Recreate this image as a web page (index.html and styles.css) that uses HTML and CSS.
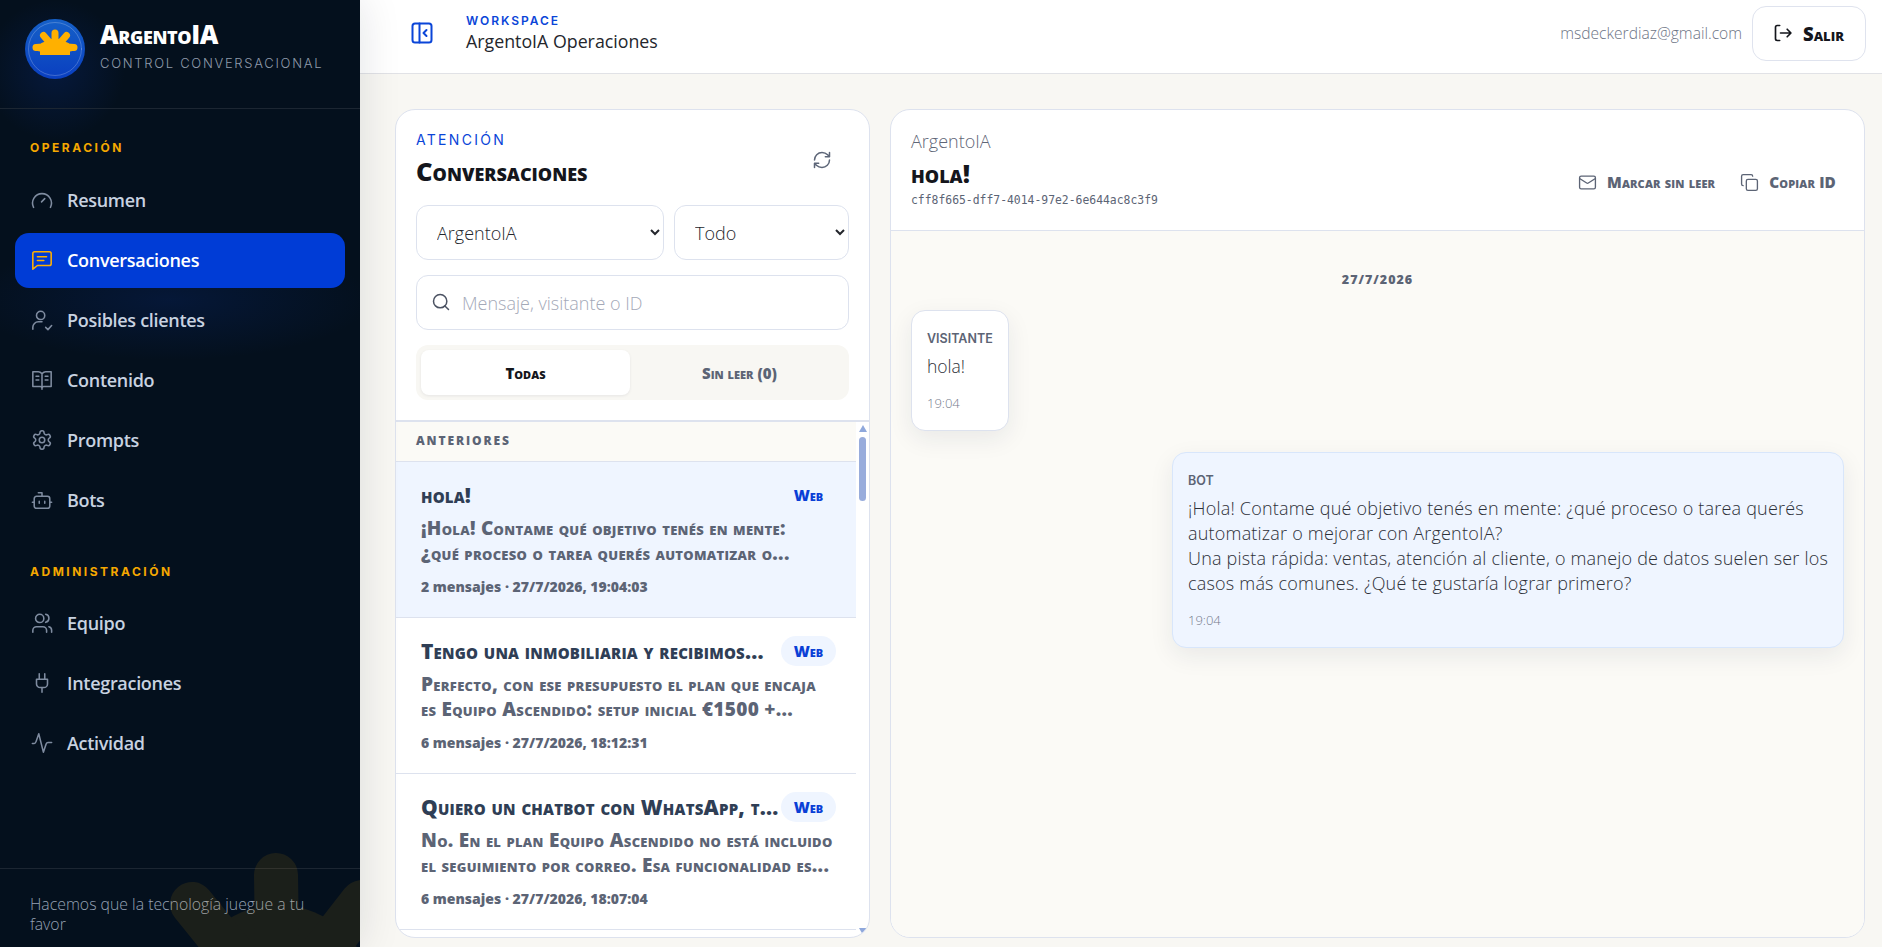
FILE: index.html
```html
<!DOCTYPE html>
<html lang="es">
<head>
<meta charset="utf-8">
<title>ArgentoIA</title>
<link rel="stylesheet" href="styles.css">
</head>
<body>
<div class="app">
  <aside class="sidebar">
    <div class="brand">
      <svg class="logo" viewBox="0 0 60 60">
        <defs><linearGradient id="lg" x1="0" y1="0" x2="0" y2="1"><stop offset="0" stop-color="#1560c8"/><stop offset="1" stop-color="#0a3fc0"/></linearGradient></defs>
        <circle cx="30" cy="30" r="30" fill="url(#lg)"/>
        <circle cx="30" cy="30" r="26.5" fill="none" stroke="#fff" stroke-opacity=".28" stroke-width=".8"/>
        <path d="M30 26L30 14M25 24L18.500 16.500M35 24L41.500 16.500M18 28L11 28.500M42 28L49 28.500" stroke="#ffb000" stroke-width="7" stroke-linecap="round" fill="none"/>
        <path d="M16.500 24L25 20.500L35 20.500L43.500 24L50 31.500L45 32.500V36H15V32.500L10 31.500Z" fill="#ffb000"/>
      </svg>
      <div class="brand-text">
        <div class="brand-name">ArgentoIA</div>
        <div class="brand-sub">CONTROL CONVERSACIONAL</div>
      </div>
    </div>
    <nav class="nav">
      <div class="nav-label">OPERACIÓN</div>
      <a class="nav-item"><svg class="ico" viewBox="0 0 24 24"><path d="M2.800 20a10.300 10.300 0 1 1 18.400 0"/><path d="M11.500 14l3.500-3.500"/></svg>Resumen</a>
      <a class="nav-item active"><svg class="ico" viewBox="0 0 24 24"><path d="M22 16a2 2 0 0 1-2 2H7l-5 4V5a2 2 0 0 1 2-2h16a2 2 0 0 1 2 2z"/><path d="M7 8.500h10M7 12.500h7"/></svg>Conversaciones</a>
      <a class="nav-item"><svg class="ico" viewBox="0 0 24 24"><circle cx="10.500" cy="7" r="4.500"/><path d="M2 22v-2a6 6 0 0 1 6-6h4"/><path d="M16 20l2.500 2.500 4-4.500"/></svg>Posibles clientes</a>
      <a class="nav-item"><svg class="ico" viewBox="0 0 24 24"><path d="M12 5v17M12 5c-1-1-2-2-4-2H2v16h8a2 2 0 0 1 2 2 2 2 0 0 1 2-2h8V3h-6c-2 0-3 1-4 2z"/><path d="M5.500 8h3M5.500 12h3M15.500 8h3M15.500 12h3"/></svg>Contenido</a>
      <a class="nav-item"><svg class="ico" viewBox="0 0 24 24"><path d="M12.220 2h-.44a2 2 0 0 0-2 2v.18a2 2 0 0 1-1 1.730l-.43.25a2 2 0 0 1-2 0l-.15-.08a2 2 0 0 0-2.730.73l-.22.38a2 2 0 0 0 .73 2.730l.15.1a2 2 0 0 1 1 1.720v.51a2 2 0 0 1-1 1.740l-.15.09a2 2 0 0 0-.73 2.730l.22.38a2 2 0 0 0 2.730.73l.15-.08a2 2 0 0 1 2 0l.43.25a2 2 0 0 1 1 1.730V20a2 2 0 0 0 2 2h.44a2 2 0 0 0 2-2v-.18a2 2 0 0 1 1-1.730l.43-.25a2 2 0 0 1 2 0l.15.08a2 2 0 0 0 2.730-.73l.22-.39a2 2 0 0 0-.73-2.730l-.15-.08a2 2 0 0 1-1-1.740v-.5a2 2 0 0 1 1-1.740l.15-.09a2 2 0 0 0 .73-2.730l-.22-.38a2 2 0 0 0-2.730-.73l-.15.08a2 2 0 0 1-2 0l-.43-.25a2 2 0 0 1-1-1.730V4a2 2 0 0 0-2-2z"/><circle cx="12" cy="12" r="3"/></svg>Prompts</a>
      <a class="nav-item"><svg class="ico" viewBox="0 0 24 24"><path d="M12 8V4H8"/><rect x="3.500" y="8" width="17" height="13" rx="2.500"/><path d="M1.500 14.500h2M20.500 14.500h2M15 13.500v2M9 13.500v2"/></svg>Bots</a>
      <div class="nav-label second">ADMINISTRACIÓN</div>
      <a class="nav-item"><svg class="ico" viewBox="0 0 24 24"><path d="M17 22v-2a4 4 0 0 0-4-4H6a4 4 0 0 0-4 4v2"/><circle cx="9.500" cy="7" r="4.500"/><path d="M22.500 22v-2a4 4 0 0 0-3-3.870"/><path d="M16 2.500a4.500 4.500 0 0 1 0 8.800"/></svg>Equipo</a>
      <a class="nav-item"><svg class="ico" viewBox="0 0 24 24"><path d="M12 22v-5M9 8V2M15 8V2M18 8v5a4 4 0 0 1-4 4h-4a4 4 0 0 1-4-4V8Z"/></svg>Integraciones</a>
      <a class="nav-item"><svg class="ico" viewBox="0 0 24 24"><path d="M1.500 12.500h2c1 0 1.500-.5 2-2L8.500 2l5 20 3-9c.4-1 1-1.500 2-1.500h4"/></svg>Actividad</a>
    </nav>
    <div class="side-foot">Hacemos que la tecnología juegue a tu favor</div>
    <svg class="watermark" viewBox="0 0 360 947"><circle class="wm-core" cx="278" cy="1000" r="95"/><path d="M278 1010L192 904M278 1010L276 875M278 1010L362 902"/></svg>
  </aside>

  <main class="main">
    <header class="topbar">
      <div class="top-left">
        <svg class="collapse" viewBox="0 0 24 24"><rect x="2.500" y="2.500" width="19" height="19" rx="2.500"/><path d="M9.500 2.500v19M16.500 15l-3-3 3-3"/></svg>
        <div>
          <div class="ws-label">WORKSPACE</div>
          <div class="ws-name">ArgentoIA Operaciones</div>
        </div>
      </div>
      <div class="top-right">
        <span class="email">msdeckerdiaz@gmail.com</span>
        <button class="logout"><svg viewBox="0 0 24 24"><path d="M8 21H5a2 2 0 0 1-2-2V5a2 2 0 0 1 2-2h3"/><path d="M17 16.500l4.500-4.500L17 7.500M21 12H9"/></svg>Salir</button>
      </div>
    </header>

    <div class="content">
      <section class="panel list-panel">
        <div class="list-head">
          <div class="head-row">
            <div>
              <div class="eyebrow">ATENCIÓN</div>
              <h1 class="list-title">Conversaciones</h1>
            </div>
            <svg class="refresh" viewBox="0 0 24 24"><path d="M3 12a9 9 0 0 1 9-9 9.750 9.750 0 0 1 6.740 2.740L21 8M21 3v5h-5M21 12a9 9 0 0 1-9 9 9.750 9.750 0 0 1-6.740-2.740L3 16M8 16H3v5"/></svg>
          </div>
          <div class="filters">
            <select class="field sel-bot"><option>ArgentoIA</option></select>
            <select class="field sel-all"><option>Todo</option></select>
          </div>
          <div class="search">
            <svg viewBox="0 0 24 24"><circle cx="11" cy="11" r="8"/><path d="M21 21l-4.300-4.300"/></svg>
            <input class="field search-input" placeholder="Mensaje, visitante o ID">
          </div>
          <div class="tabs">
            <div class="tab on">Todas</div>
            <div class="tab">Sin leer (0)</div>
          </div>
        </div>
        <div class="list-wrap">
          <div class="list">
            <div class="group">ANTERIORES</div>
            <article class="conv selected">
              <div class="conv-top"><span class="conv-title">hola!</span><span class="badge">Web</span></div>
              <p class="conv-text">¡Hola! Contame qué objetivo tenés en mente:<br>¿qué proceso o tarea querés automatizar o...</p>
              <div class="conv-meta">2 mensajes · 27/7/2026, 19:04:03</div>
            </article>
            <article class="conv">
              <div class="conv-top"><span class="conv-title">Tengo una inmobiliaria y recibimos...</span><span class="badge">Web</span></div>
              <p class="conv-text">Perfecto, con ese presupuesto el plan que encaja<br>es Equipo Ascendido: setup inicial €1500 +...</p>
              <div class="conv-meta">6 mensajes · 27/7/2026, 18:12:31</div>
            </article>
            <article class="conv">
              <div class="conv-top"><span class="conv-title">Quiero un chatbot con WhatsApp, t...</span><span class="badge">Web</span></div>
              <p class="conv-text">No. En el plan Equipo Ascendido no está incluido<br>el seguimiento por correo. Esa funcionalidad es...</p>
              <div class="conv-meta">6 mensajes · 27/7/2026, 18:07:04</div>
            </article>
          </div>
          <div class="scroll">
            <span class="arrow up"></span>
            <span class="thumb"></span>
            <span class="track"></span>
            <span class="arrow down"></span>
          </div>
        </div>
      </section>

      <section class="panel chat-panel">
        <div class="chat-head">
          <div>
            <div class="chat-bot">ArgentoIA</div>
            <h2 class="chat-title">hola!</h2>
            <div class="chat-id">cff8f665-dff7-4014-97e2-6e644ac8c3f9</div>
          </div>
          <div class="chat-actions">
            <span class="action"><svg viewBox="0 0 24 24"><rect x="2" y="4" width="20" height="16" rx="2"/><path d="M22 7l-8.970 5.700a1.940 1.940 0 0 1-2.060 0L2 7"/></svg>Marcar sin leer</span>
            <span class="action"><svg viewBox="0 0 24 24"><rect x="8" y="8" width="14" height="14" rx="2"/><path d="M4 16c-1.100 0-2-.9-2-2V4c0-1.100.9-2 2-2h10c1.100 0 2 .9 2 2"/></svg>Copiar ID</span>
          </div>
        </div>
        <div class="chat-body">
          <div class="chat-date">27/7/2026</div>
          <div class="bubble visitor">
            <div class="who">VISITANTE</div>
            <div class="msg">hola!</div>
            <div class="time">19:04</div>
          </div>
          <div class="bubble bot">
            <div class="who">BOT</div>
            <div class="msg">¡Hola! Contame qué objetivo tenés en mente: ¿qué proceso o tarea querés automatizar o mejorar con ArgentoIA?<br>Una pista rápida: ventas, atención al cliente, o manejo de datos suelen ser los casos más comunes. ¿Qué te gustaría lograr primero?</div>
            <div class="time">19:04</div>
          </div>
        </div>
      </section>
    </div>
  </main>
</div>
</body>
</html>
```

FILE: styles.css
```css
* { box-sizing: border-box; }
html, body { margin: 0; height: 100%; overflow: hidden; }
body {
  font-family: "Open Sans", "Noto Sans", sans-serif;
  font-weight: 300;
  color: #1f2430;
  background: #f8f7f3;
}
svg { fill: none; stroke: currentColor; stroke-width: 2; stroke-linecap: round; stroke-linejoin: round; flex: none; }
p, h1, h2 { margin: 0; }

.app { display: grid; grid-template-columns: 360px 1fr; height: 947px; }

/* Sidebar */
.sidebar {
  position: relative;
  display: flex;
  flex-direction: column;
  overflow: hidden;
  color: #c8d2e0;
  background:
    radial-gradient(ellipse 200px 60px at 170px 300px, rgba(10, 50, 150, .22), transparent),
    radial-gradient(circle 70px at 55px 70px, rgba(10, 50, 150, .25), transparent),
    #04101d;
  box-shadow: 0 0 40px rgba(20, 25, 40, .12);
  z-index: 2;
}
.brand {
  display: flex;
  align-items: center;
  gap: 15px;
  height: 109px;
  padding: 0 25px 11px;
  border-bottom: 1px solid #1c2632;
}
.logo { width: 60px; height: 60px; stroke: none; }
.brand-name {
  font-family: "Open Sans", sans-serif;
  font-variant: small-caps;
  font-weight: 800;
  font-size: 25.700px;
  line-height: 30px;
  letter-spacing: -.4px;
  color: #fff;
  margin-top: -6px;
}
.brand-sub {
  margin-top: 5px;
  font-family: "Inter", sans-serif;
  font-weight: 300;
  font-size: 13px;
  line-height: 16px;
  letter-spacing: 1.700px;
  white-space: nowrap;
  color: #8f9bab;
}
.nav { display: flex; flex-direction: column; padding: 31px 15px 0; }
.nav-label {
  padding-left: 15px;
  margin-bottom: 17px;
  font-family: "Inter", sans-serif;
  font-weight: 700;
  font-size: 12px;
  line-height: 16px;
  letter-spacing: 2.500px;
  color: #f5a800;
}
.nav-label.second { margin-top: 31px; margin-bottom: 16px; }
.nav-item {
  display: flex;
  align-items: center;
  gap: 13px;
  height: 55px;
  margin-bottom: 5px;
  padding: 0 0 2px 15px;
  border-radius: 14px;
  font-size: 18px;
  font-weight: 600;
  letter-spacing: -.3px;
  color: #c8d2e0;
}
.ico { width: 24px; height: 24px; padding: 1px; color: #7f8ca0; stroke-width: 1.700; }
.nav-item.active { background: #003cd6; color: #fff; }
.nav-item.active .ico { color: #ffb000; }
.side-foot {
  margin-top: auto;
  padding: 25px 45px 13px 30px;
  border-top: 1px solid #1c2632;
  font-size: 15.800px;
  line-height: 20px;
  color: #95a1b4;
}
.watermark {
  position: absolute;
  left: 0; top: 0;
  width: 360px; height: 947px;
  pointer-events: none;
  stroke: #ffb000;
  stroke-width: 44;
  opacity: .09;
}
.wm-core { fill: #ffb000; stroke: none; }

/* Topbar */
.main { display: flex; flex-direction: column; min-width: 0; }
.topbar {
  display: flex;
  align-items: center;
  justify-content: space-between;
  height: 74px;
  padding: 0 16px 7px 50px;
  background: #fff;
  border-bottom: 1px solid #e1e2e6;
}
.top-left { display: flex; align-items: center; gap: 32px; }
.collapse { width: 24px; height: 24px; color: #0a45d8; }
.ws-label {
  margin-top: 1px;
  font-family: "Inter", sans-serif;
  font-weight: 600;
  font-size: 12px;
  line-height: 14px;
  letter-spacing: 1.950px;
  color: #0a45d8;
}
.ws-name { margin-top: 1px; font-size: 17.800px; font-weight: 400; line-height: 24px; color: #24262c; }
.top-right { display: flex; align-items: center; gap: 10px; }
.email { font-size: 15.600px; color: #6d7485; }
.logout {
  display: flex;
  align-items: center;
  gap: 10px;
  width: 114px;
  height: 55px;
  padding: 0 20px;
  background: #fff;
  border: 1px solid #dfe3ee;
  border-radius: 14px;
  font: 800 18.500px "Open Sans", sans-serif;
  font-variant: small-caps;
  color: #14161c;
}
.logout svg { width: 20px; height: 20px; }

/* Panels */
.content {
  flex: 1;
  display: flex;
  gap: 20px;
  min-height: 0;
  padding: 35px 17px 9px 35px;
}
.panel {
  display: flex;
  flex-direction: column;
  min-height: 0;
  overflow: hidden;
  background: #fff;
  border: 1px solid #dde2ee;
  border-radius: 20px;
}
.list-panel { width: 475px; flex: none; }
.chat-panel { flex: 1; min-width: 0; }

.list-head { padding: 20px 20px 20px; border-bottom: 2px solid #dde2ee; }
.head-row { display: flex; justify-content: space-between; align-items: flex-start; height: 75px; }
.eyebrow {
  margin-top: 1px;
  font-family: "Inter", sans-serif;
  font-weight: 400;
  font-size: 14px;
  line-height: 18px;
  letter-spacing: 2.300px;
  color: #0a45d8;
}
.list-title {
  margin-top: 6px;
  font-family: "Open Sans", sans-serif;
  font-variant: small-caps;
  font-weight: 800;
  font-size: 25.500px;
  line-height: 32px;
  color: #14161c;
}
.refresh { width: 20px; height: 20px; margin: 20px 17px 0 0; color: #5d6678; stroke-width: 1.800; }
.filters { display: flex; gap: 10px; }
.field {
  height: 55px;
  background: #fff;
  border: 1px solid #dde2ee;
  border-radius: 12px;
  font-family: "Open Sans", sans-serif;
  font-size: 18px;
  font-weight: 300;
  color: #24262c;
}
select.field { padding: 0 16px; }
.sel-bot { width: 248px; }
.sel-all { flex: 1; min-width: 0; }
.search { position: relative; margin-top: 15px; }
.search svg { position: absolute; left: 15px; top: 17px; width: 20px; height: 20px; color: #4b5262; stroke-width: 1.800; }
.search-input { display: block; width: 100%; padding: 0 16px 0 45px; outline: none; }
.search-input::placeholder { color: #a4a9b8; opacity: 1; }
.tabs { display: flex; gap: 5px; height: 55px; margin-top: 15px; padding: 5px; background: #f8f7f3; border-radius: 12px; }
.tab {
  flex: 1;
  display: flex;
  align-items: center;
  justify-content: center;
  border-radius: 8px;
  font-family: "Open Sans", sans-serif;
  font-variant: small-caps;
  font-weight: 800;
  font-size: 15px;
  color: #5c6475;
}
.tab.on { background: #fff; color: #14161c; box-shadow: 0 1px 3px rgba(20, 30, 60, .08); }

.list-wrap { position: relative; flex: 1; min-height: 0; display: flex; }
.list { flex: 1; min-width: 0; overflow: hidden; }
.group {
  height: 40px;
  padding-left: 20px;
  background: #fbfaf6;
  border-bottom: 1px solid #dde2ee;
  font-family: "Open Sans", sans-serif;
  font-weight: 800;
  font-size: 12px;
  line-height: 37px;
  letter-spacing: 1.900px;
  color: #5c6475;
}
.conv { height: 156px; padding: 18px 20px 0 25px; border-bottom: 1px solid #dde2ee; }
.conv.selected { background: #eff5ff; }
.conv-top { display: flex; align-items: center; justify-content: space-between; gap: 10px; height: 30px; }
.conv-title {
  flex: 1;
  min-width: 0;
  white-space: nowrap;
  font-family: "Open Sans", sans-serif;
  font-variant: small-caps;
  font-weight: 800;
  font-size: 21px;
  letter-spacing: .2px;
  color: #2f3e55;
}
.badge {
  flex: none;
  width: 55px;
  height: 30px;
  background: #eff5ff;
  border-radius: 15px;
  text-align: center;
  font-family: "Open Sans", sans-serif;
  font-variant: small-caps;
  font-weight: 800;
  font-size: 15.500px;
  line-height: 31px;
  color: #0a3fd6;
}
.conv-text {
  margin-top: 6px;
  white-space: nowrap;
  font-family: "Open Sans", sans-serif;
  font-variant: small-caps;
  font-weight: 800;
  font-size: 19px;
  line-height: 25px;
  letter-spacing: .3px;
  color: #5c6475;
}
.conv-meta {
  margin-top: 11px;
  font-family: "Open Sans", sans-serif;
  font-weight: 800;
  font-size: 14px;
  line-height: 20px;
  color: #5c6475;
}
.scroll { flex: none; width: 13px; display: flex; flex-direction: column; align-items: center; padding: 3px 0 2px; }
.arrow { width: 0; height: 0; border-left: 4.500px solid transparent; border-right: 4.500px solid transparent; }
.arrow.up { border-bottom: 7px solid #8fa8dc; }
.arrow.down { border-top: 7px solid #8fa8dc; }
.thumb { width: 7px; height: 64px; margin-top: 5px; border-radius: 4px; background: #98acdc; }
.track { flex: 1; }

/* Chat */
.chat-head {
  display: flex;
  justify-content: space-between;
  align-items: flex-end;
  height: 121px;
  padding: 19px 28px 0 20px;
  border-bottom: 1px solid #dde2ee;
}
.chat-head > div:first-child { align-self: flex-start; }
.chat-bot { font-size: 18px; line-height: 24px; color: #5f6677; }
.chat-title {
  margin-top: 5px;
  font-family: "Open Sans", sans-serif;
  font-variant: small-caps;
  font-weight: 800;
  font-size: 25px;
  line-height: 30px;
  color: #14161c;
}
.chat-id { margin-top: 4px; font-family: "DejaVu Sans Mono", monospace; font-weight: 400; font-size: 11.400px; line-height: 16px; color: #5c6475; }
.chat-actions { display: flex; gap: 25px; margin-bottom: 38px; }
.action {
  display: flex;
  align-items: center;
  gap: 10px;
  font-family: "Open Sans", sans-serif;
  font-variant: small-caps;
  font-weight: 800;
  font-size: 15.300px;
  letter-spacing: .15px;
  color: #5c6475;
}
.action svg { width: 19px; height: 19px; stroke-width: 1.700; }
.chat-body { flex: 1; display: flex; flex-direction: column; padding: 39px 20px 0 20px; background: #fbfaf6; }
.chat-date {
  align-self: center;
  height: 21px;
  margin-bottom: 19px;
  font-family: "Open Sans", sans-serif;
  font-weight: 800;
  font-size: 12.500px;
  line-height: 20px;
  letter-spacing: 1px;
  color: #5c6475;
}
.bubble {
  padding: 19px 15px 13px;
  border-radius: 14px;
  box-shadow: 0 8px 24px rgba(30, 40, 70, .08);
}
.visitor { align-self: flex-start; height: 121px; margin-bottom: 21px; background: #fff; border: 1px solid #dde2ee; }
.bot { align-self: flex-end; width: 672px; height: 196px; background: #eff5ff; border: 1px solid #d8e6fb; padding-right: 6px; }
.who { font-family: "Inter", sans-serif; font-weight: 600; font-size: 12.500px; line-height: 18px; color: #5c6475; }
.msg { margin-top: 6px; font-size: 17.500px; line-height: 25px; color: #2d3038; }
.bot .msg { margin-top: 6px; font-size: 18px; letter-spacing: .2px; }
.time { margin-top: 15px; font-size: 13px; line-height: 18px; color: #747b8c; }
```
